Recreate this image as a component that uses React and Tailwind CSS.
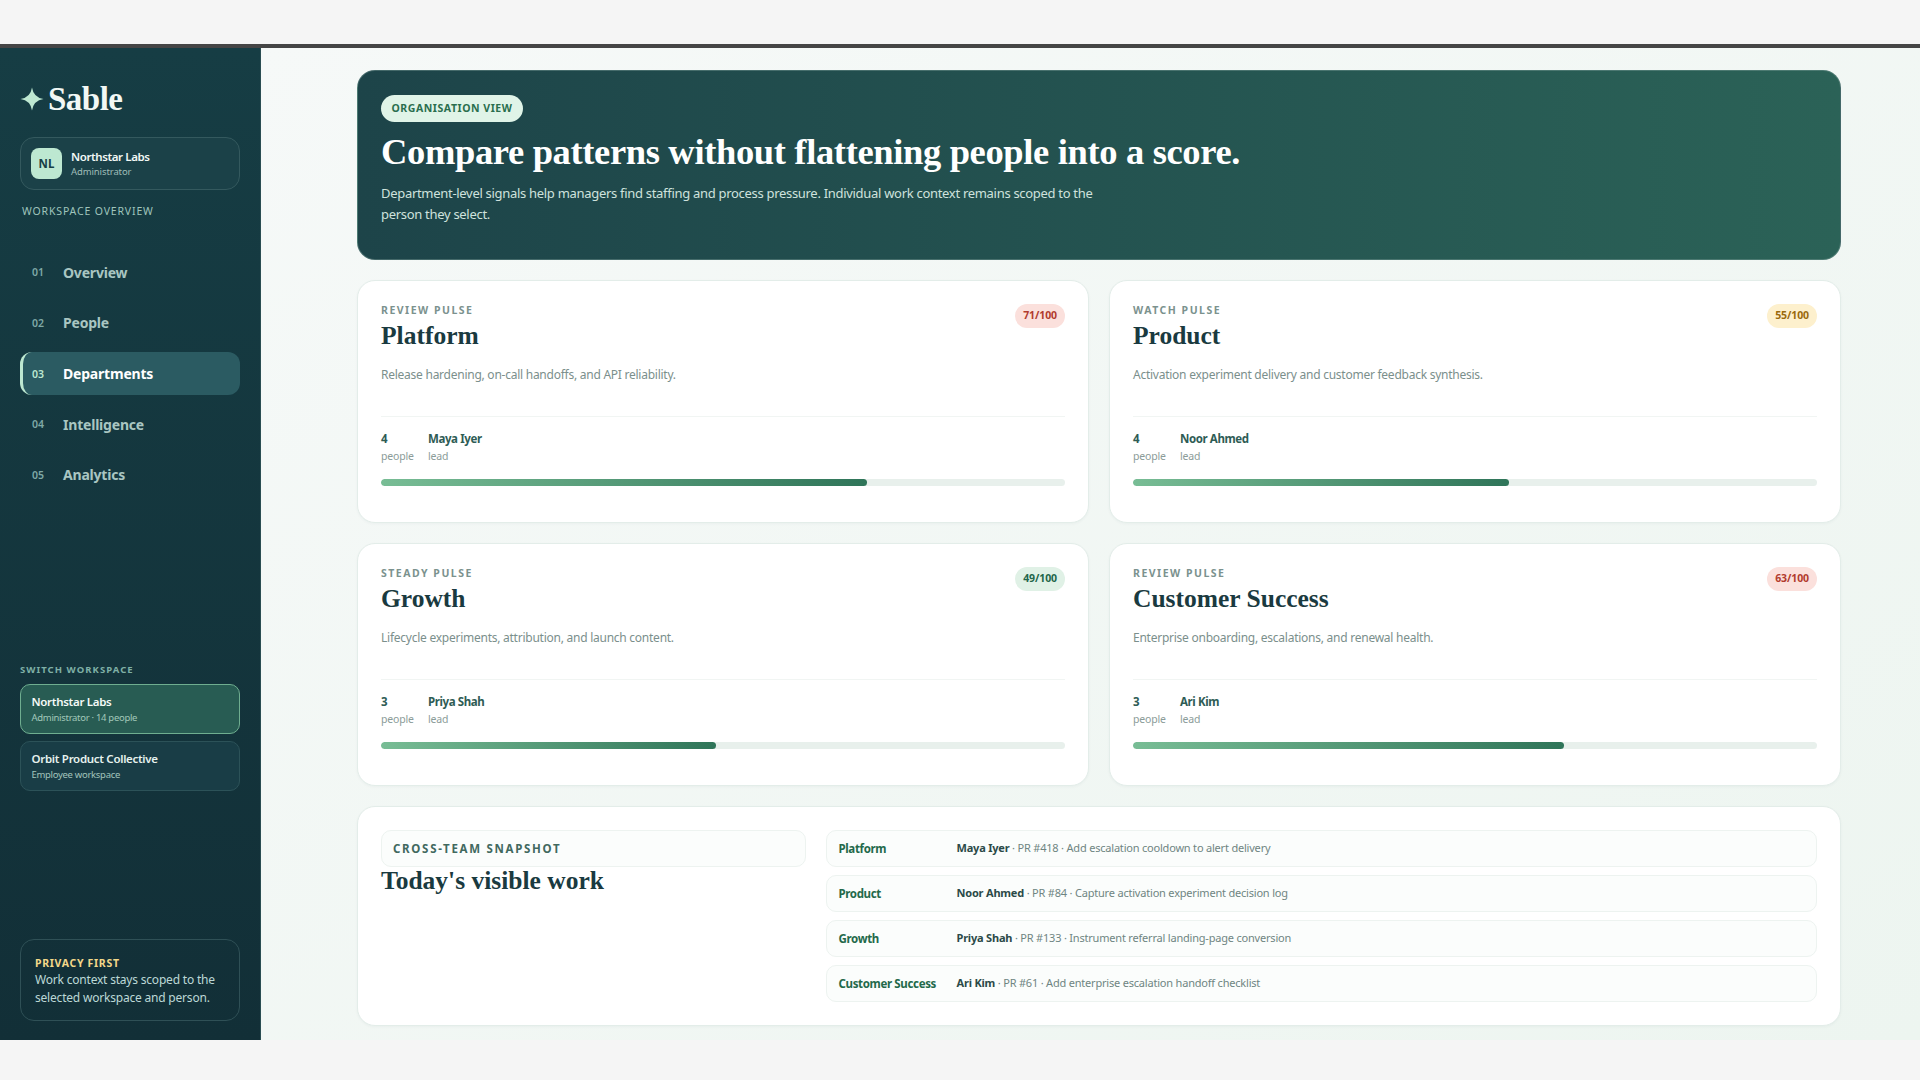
const sans = "font-['Noto_Sans','Open_Sans',sans-serif]";
const serif = "font-['Liberation_Serif',serif]";

const nav = [
  ["01", "Overview"],
  ["02", "People"],
  ["03", "Departments"],
  ["04", "Intelligence"],
  ["05", "Analytics"],
];

const tones = {
  red: "bg-[#fbe0dc] text-[#b23b2e]",
  amber: "bg-[#fdf0cd] text-[#9a6a0c]",
  green: "bg-[#e0f1e6] text-[#23664a]",
};

const depts = [
  { label: "REVIEW PULSE", name: "Platform", score: 71, tone: "red", desc: "Release hardening, on-call handoffs, and API reliability.", count: 4, lead: "Maya Iyer" },
  { label: "WATCH PULSE", name: "Product", score: 55, tone: "amber", desc: "Activation experiment delivery and customer feedback synthesis.", count: 4, lead: "Noor Ahmed" },
  { label: "STEADY PULSE", name: "Growth", score: 49, tone: "green", desc: "Lifecycle experiments, attribution, and launch content.", count: 3, lead: "Priya Shah" },
  { label: "REVIEW PULSE", name: "Customer Success", score: 63, tone: "red", desc: "Enterprise onboarding, escalations, and renewal health.", count: 3, lead: "Ari Kim" },
];

const work = [
  ["Platform", "Maya Iyer", " · PR #418 · Add escalation cooldown to alert delivery"],
  ["Product", "Noor Ahmed", " · PR #84 · Capture activation experiment decision log"],
  ["Growth", "Priya Shah", " · PR #133 · Instrument referral landing-page conversion"],
  ["Customer Success", "Ari Kim", " · PR #61 · Add enterprise escalation handoff checklist"],
];

function Sidebar() {
  return (
    <aside className="w-[261px] shrink-0 flex flex-col px-5 pt-[33px] pb-[19px] bg-gradient-to-b from-[#163d44] to-[#122f37] border-r border-[#2a4d52]">
      <div className="flex items-center gap-[4px] h-[36px]">
        <svg width="24" height="24" viewBox="0 0 24 24" className="shrink-0">
          <path d="M12 0.500 Q13.500 10.500 23.500 12 Q13.500 13.500 12 23.500 Q10.500 13.500 0.500 12 Q10.500 10.500 12 0.500 Z" fill="#bde8d1" />
        </svg>
        <span className={`${serif} font-bold text-[33px] leading-none tracking-[-0.5px] text-[#f2f8f5]`}>Sable</span>
      </div>
      <div className="mt-[20px] h-[53px] flex items-center gap-[9px] px-[10px] rounded-[14px] border border-[#34595e] bg-[#1b4148]">
        <div className="w-[31px] h-[31px] rounded-[8px] bg-[#bde8d1] flex items-center justify-center text-[11.500px] font-bold text-[#163f46]">NL</div>
        <div className="flex flex-col">
          <span className="text-[11.500px] leading-[16px] font-semibold text-[#f2f8f5] tracking-[-0.4px]">Northstar Labs</span>
          <span className="text-[9.500px] leading-[14px] text-[#9fbdb8] tracking-[-0.1px]">Administrator</span>
        </div>
      </div>
      <div className="mt-[14px] ml-[2px] text-[10.500px] leading-[14px] tracking-[0.85px] text-[#9fc4bc]">WORKSPACE OVERVIEW</div>
      <nav className="mt-[32.500px] flex flex-col gap-[7.700px]">
        {nav.map(([n, label]) => {
          const active = label === "Departments";
          return (
            <div
              key={n}
              className={`h-[43px] flex items-center rounded-[12px] ${active ? "bg-[#2b5b62] border-l-[3px] border-[#bde8d1] pl-[9px]" : "pl-[12px]"}`}
            >
              <span className={`w-[31px] pt-[2px] text-[10.500px] font-semibold ${active ? "text-[#bde8d1]" : "text-[#7fa9a6]"}`}>{n}</span>
              <span className={`text-[14px] font-bold tracking-[-0.2px] ${active ? "text-white" : "text-[#a9c6c2]"}`}>{label}</span>
            </div>
          );
        })}
      </nav>
      <div className="mt-auto flex flex-col">
        <div className="text-[9.500px] leading-[14px] font-bold tracking-[1.05px] text-[#7fb0a6]">SWITCH WORKSPACE</div>
        <div className="mt-[7px] h-[50px] rounded-[10px] border border-[#6fae90] bg-[#285c53] px-[10.500px] flex flex-col justify-center">
          <span className="text-[11.500px] leading-[17px] font-semibold text-[#f5faf7] tracking-[-0.3px]">Northstar Labs</span>
          <span className="text-[9.500px] leading-[15px] text-[#a2c8ba] tracking-[-0.3px]">Administrator · 14 people</span>
        </div>
        <div className="mt-[7px] h-[50px] rounded-[10px] border border-[#2c5258] bg-[#193d46] px-[10.500px] flex flex-col justify-center">
          <span className="text-[11.500px] leading-[17px] font-semibold text-[#e6f2ee] tracking-[-0.3px]">Orbit Product Collective</span>
          <span className="text-[9.500px] leading-[15px] text-[#a2c4bc] tracking-[-0.3px]">Employee workspace</span>
        </div>
        <div className="mt-[148px] h-[82px] rounded-[14px] border border-[#2f5056] px-[14px] pt-[16px] flex flex-col">
          <span className="text-[10.500px] leading-[15px] font-bold tracking-[0.7px] text-[#f3d88a]">PRIVACY FIRST</span>
          <span className="text-[12px] leading-[18px] text-[#bcd8d6] tracking-[-0.2px]">Work context stays scoped to the selected workspace and person.</span>
        </div>
      </div>
    </aside>
  );
}

function DeptCard({ d }) {
  return (
    <section className="h-[243px] rounded-[18px] bg-white border border-[#e3ede9] shadow-[0_1px_3px_rgba(22,63,70,0.04)] px-[23px] pt-[22px] flex flex-col">
      <div className="flex justify-between items-start">
        <div className="flex flex-col">
          <span className="text-[10.500px] leading-[14px] font-bold tracking-[1.5px] text-[#7b928e]">{d.label}</span>
          <span className={`${serif} mt-[4px] text-[25.500px] leading-[30px] font-bold text-[#1a3a40]`}>{d.name}</span>
        </div>
        <span className={`mt-[1px] h-[24px] px-[8px] rounded-full flex items-center text-[10.500px] font-bold tracking-[-0.1px] ${tones[d.tone]}`}>{d.score}/100</span>
      </div>
      <p className="mt-[15px] text-[12px] leading-[18px] text-[#7b8f8c] tracking-[-0.25px]">{d.desc}</p>
      <div className="mt-[32px] border-t border-[#f1f5f3] pt-[12.500px] flex gap-[15px]">
        <div className="w-[32px] flex flex-col">
          <span className="text-[11.500px] leading-[18px] font-bold text-[#2e5c55]">{d.count}</span>
          <span className="text-[10.500px] leading-[17px] text-[#8b9c99] tracking-[-0.2px]">people</span>
        </div>
        <div className="flex flex-col">
          <span className="text-[11.500px] leading-[18px] font-bold text-[#2e5c55] tracking-[-0.4px]">{d.lead}</span>
          <span className="text-[10.500px] leading-[17px] text-[#8b9c99] tracking-[-0.2px]">lead</span>
        </div>
      </div>
      <div className="mt-[14px] h-[7px] rounded-full bg-[#e8f0ec] overflow-hidden">
        <div className="h-full rounded-full bg-gradient-to-r from-[#78bd95] to-[#2f7559]" style={{ width: `${d.score}%` }} />
      </div>
    </section>
  );
}

export default function App() {
  return (
    <div className={`${sans} w-[1920px] h-[1080px] overflow-hidden flex flex-col bg-[#f5f5f5]`}>
      <div className="h-[44px] shrink-0" />
      <div className="h-[4px] shrink-0 bg-[#454545]" />
      <div className="h-[992px] shrink-0 flex">
        <Sidebar />
        <main className="flex-1 bg-gradient-to-br from-[#f6f9f8] to-[#edf5f0] pl-[96px] pr-[79px] pt-[22px] flex flex-col gap-[20px]">
          <header className="h-[190px] rounded-[18px] bg-gradient-to-r from-[#1d4449] to-[#2b6257] border border-[#7f9f9a]/40 px-[23px] pt-[23px]">
            <span className="inline-flex items-center h-[27px] px-[10.500px] rounded-full bg-[#e0f4e8] text-[10.500px] font-bold tracking-[0.55px] text-[#2a6e4e]">ORGANISATION VIEW</span>
            <h1 className={`${serif} mt-[9px] text-[36.500px] leading-[42px] font-bold text-white tracking-[-0.35px]`}>Compare patterns without flattening people into a score.</h1>
            <p className="mt-[10px] w-[730px] text-[13px] leading-[20.500px] text-[#cfe2dd] tracking-[-0.3px]">Department-level signals help managers find staffing and process pressure. Individual work context remains scoped to the person they select.</p>
          </header>
          <div className="grid grid-cols-2 gap-x-[20px] gap-y-[20px]">
            {depts.map((d) => <DeptCard key={d.name} d={d} />)}
          </div>
          <section className="h-[220px] rounded-[18px] bg-white border border-[#e3ede9] shadow-[0_1px_3px_rgba(22,63,70,0.04)] px-[23px] pt-[23px] flex gap-[20px]">
            <div className="w-[425px] shrink-0">
              <div className="h-[37px] rounded-[10px] border border-[#edf3f0] bg-[#fbfdfc] px-[11px] flex items-center text-[11.500px] font-bold tracking-[1.7px] text-[#41695f]">CROSS-TEAM SNAPSHOT</div>
              <h2 className={`${serif} mt-[-1px] text-[25.500px] leading-[30px] font-bold text-[#1a3a40]`}>Today's visible work</h2>
            </div>
            <div className="flex-1 flex flex-col gap-[8px]">
              {work.map(([dept, who, rest]) => (
                <div key={dept} className="h-[37px] rounded-[10px] border border-[#edf3f0] bg-[#fbfdfc] px-[11.500px] flex items-center">
                  <span className="w-[118px] shrink-0 text-[11.500px] font-bold tracking-[-0.35px] text-[#23694a]">{dept}</span>
                  <span className="text-[11px] tracking-[-0.2px] text-[#6f8582]"><b className="font-bold text-[#2b4a48]">{who}</b>{rest}</span>
                </div>
              ))}
            </div>
          </section>
        </main>
      </div>
    </div>
  );
}
